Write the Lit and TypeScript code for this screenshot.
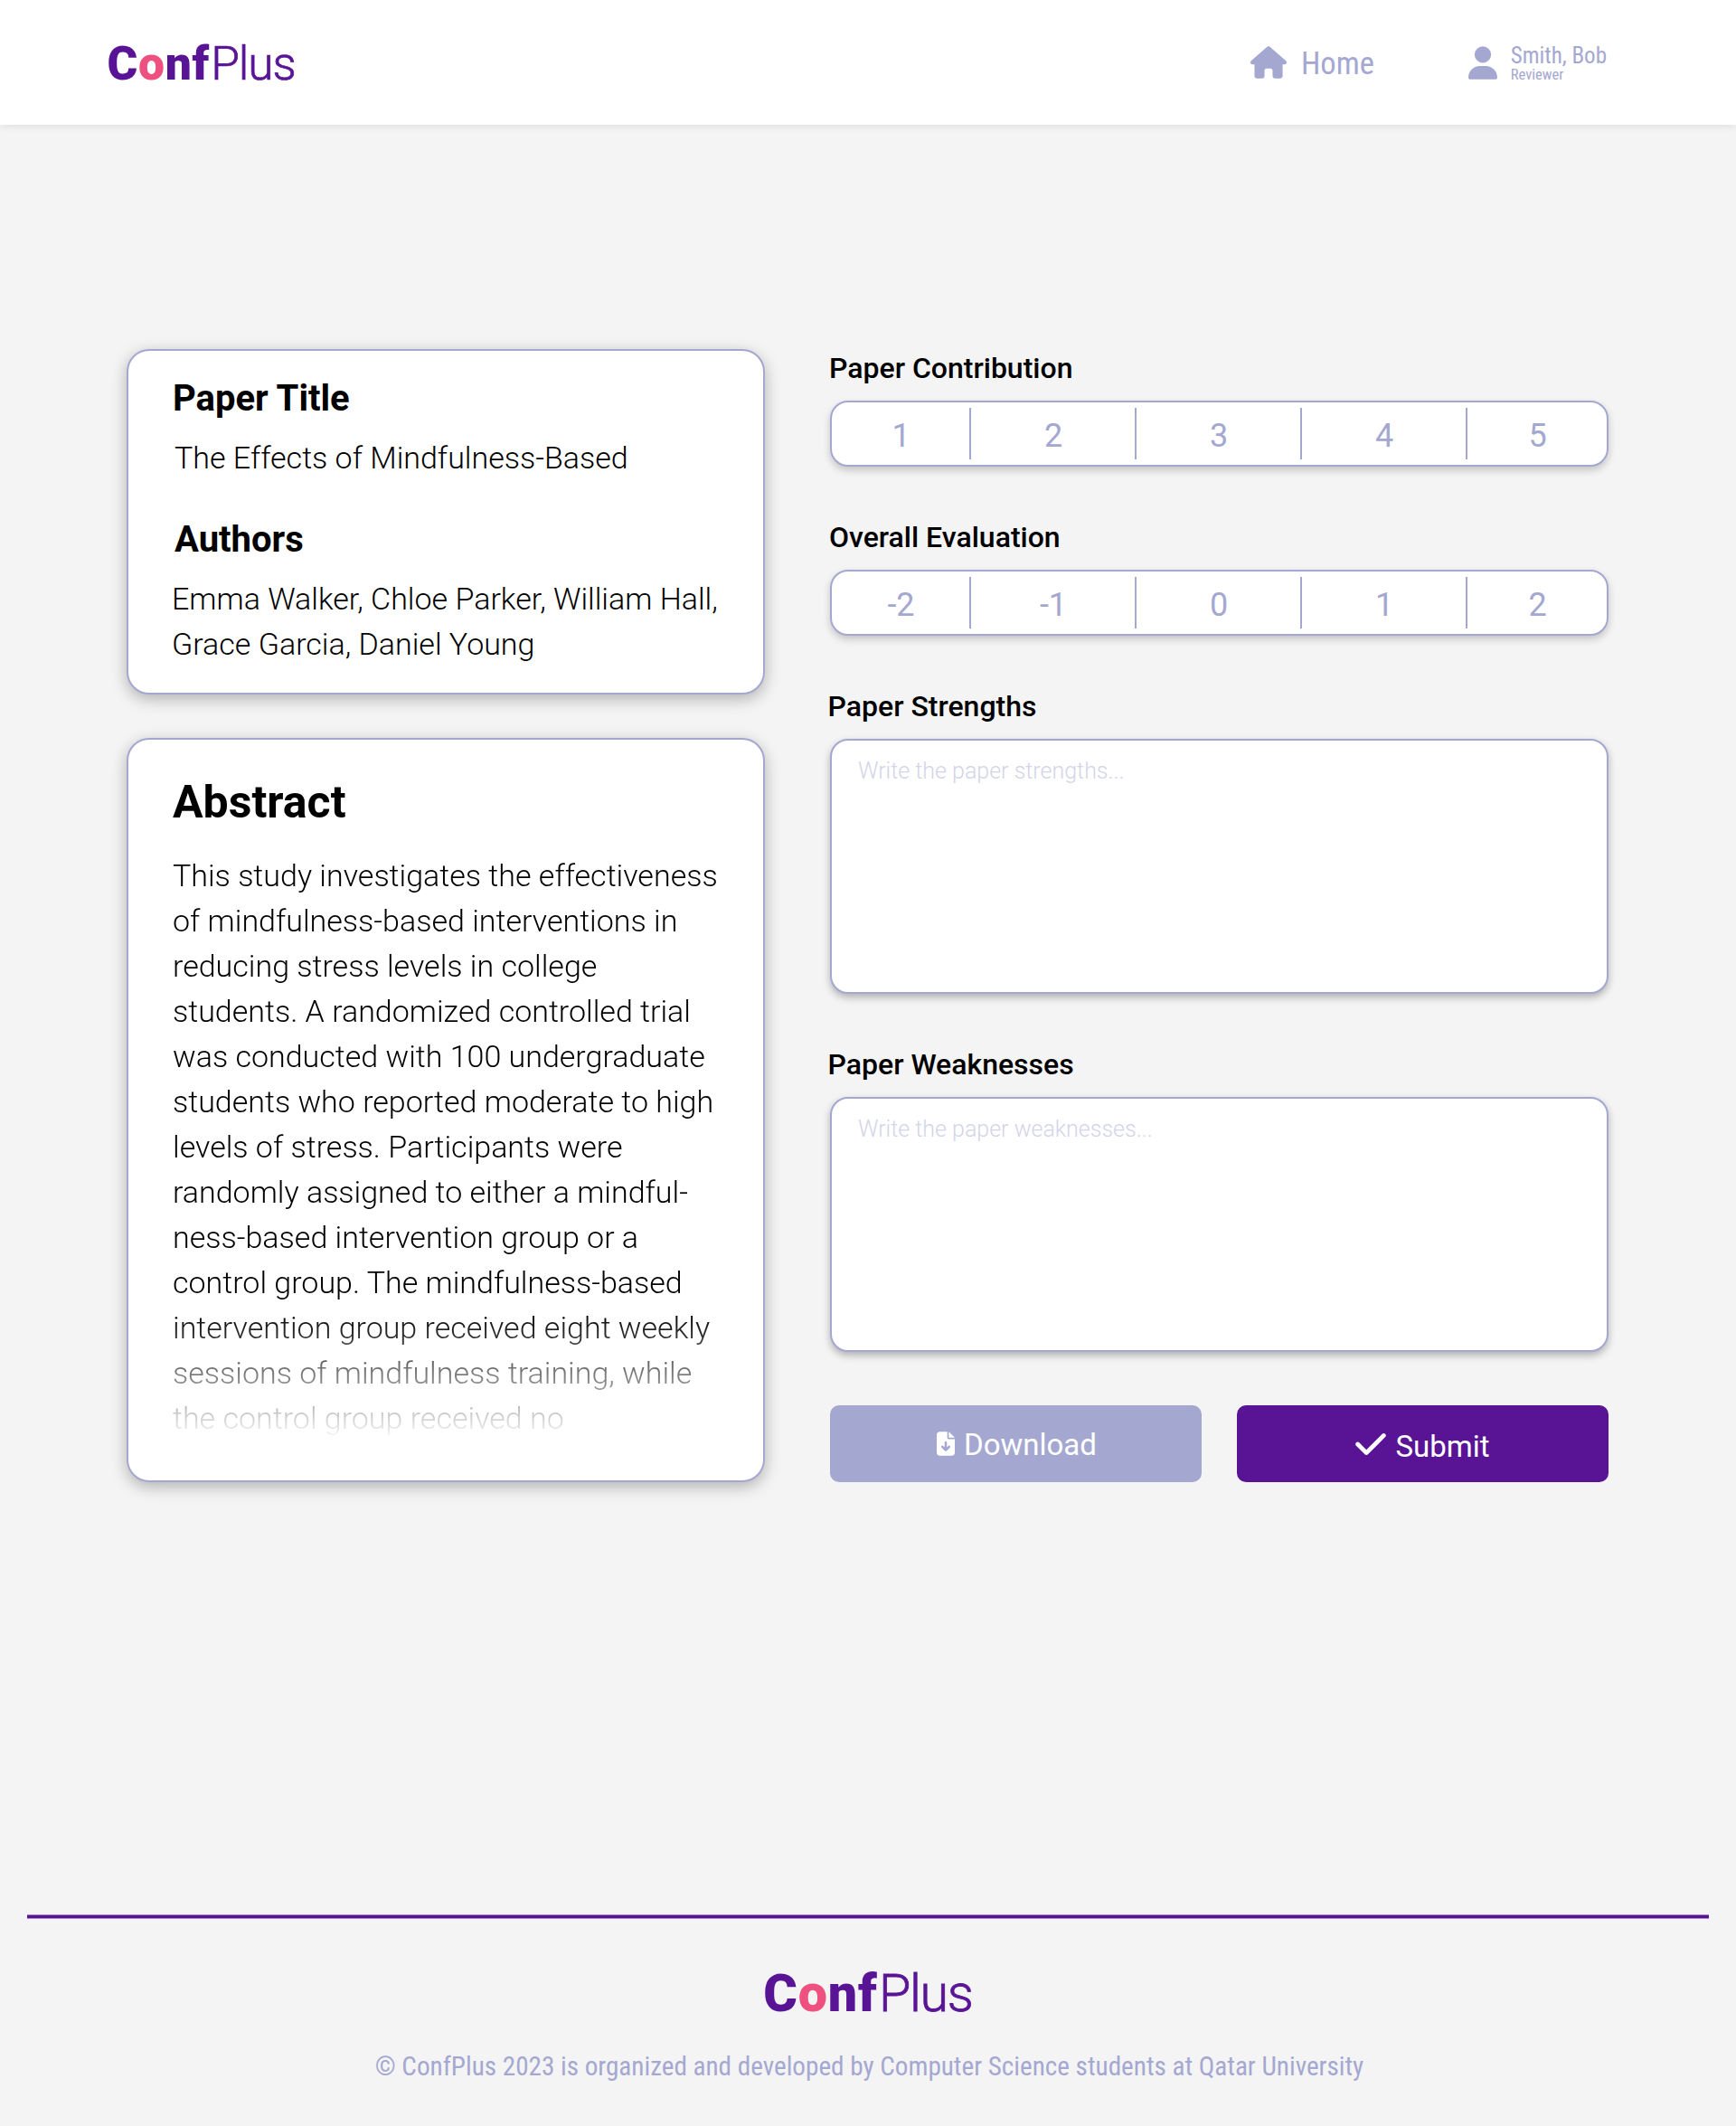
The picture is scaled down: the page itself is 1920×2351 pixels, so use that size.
import { LitElement, html, css, svg } from "lit";
import { customElement, property, state } from "lit/decorators.js";
import { classMap } from "lit/directives/class-map.js";

const icons = {
  house: {
    box: "0 0 576 512",
    d: "M575.8 255.5c0 18-15 32.1-32 32.1h-32l.7 160.2c0 2.7-.2 5.4-.5 8.1V472c0 22.1-17.9 40-40 40H456c-1.1 0-2.2 0-3.3-.1c-1.4 .1-2.8 .1-4.2 .1H416 392c-22.1 0-40-17.9-40-40V448 384c0-17.7-14.3-32-32-32H256c-17.7 0-32 14.3-32 32v64 24c0 22.1-17.9 40-40 40H160 128.1c-1.5 0-3-.1-4.5-.2c-1.2 .1-2.4 .2-3.6 .2H104c-22.1 0-40-17.9-40-40V360c0-.9 0-1.9 .1-2.8V287.6H32c-18 0-32-14-32-32.1c0-9 3-17 10-24L266.4 8c7-7 15-8 22-8s15 2 21 7L564.8 231.5c8 7 12 15 11 24z",
  },
  user: {
    box: "0 0 448 512",
    d: "M224 256A128 128 0 1 0 224 0a128 128 0 1 0 0 256zm-45.7 48C79.8 304 0 383.8 0 482.3C0 498.7 13.3 512 29.7 512H418.3c16.4 0 29.7-13.3 29.7-29.7C448 383.8 368.2 304 269.7 304H178.3z",
  },
  file: {
    box: "0 0 384 512",
    d: "M64 0C28.7 0 0 28.7 0 64V448c0 35.3 28.7 64 64 64H320c35.3 0 64-28.7 64-64V160H256c-17.7 0-32-14.3-32-32V0H64zM256 0V128H384L256 0zM216 232V334.1l31-31c9.4-9.4 24.6-9.4 33.9 0s9.4 24.6 0 33.9l-72 72c-9.4 9.4-24.6 9.4-33.9 0l-72-72c-9.4-9.4-9.4-24.6 0-33.9s24.6-9.4 33.9 0l31 31V232c0-13.3 10.7-24 24-24s24 10.7 24 24z",
  },
  check: {
    box: "0 96 448 320",
    d: "M438.6 105.4c12.5 12.5 12.5 32.8 0 45.3l-256 256c-12.5 12.5-32.8 12.5-45.3 0l-128-128c-12.5-12.5-12.5-32.8 0-45.3s32.8-12.5 45.3 0L160 338.7 393.4 105.4c12.5-12.5 32.8-12.5 45.3 0z",
  },
};

type IconName = keyof typeof icons;

const icon = (name: IconName) => html`
  <svg class="icon icon-${name}" viewBox=${icons[name].box} aria-hidden="true">
    ${svg`<path fill="currentColor" d=${icons[name].d}></path>`}
  </svg>
`;

@customElement("conf-logo")
export class ConfLogo extends LitElement {
  static styles = css`
    :host {
      display: block;
      white-space: nowrap;
      color: #591496;
      line-height: 1.2;
    }
    .conf {
      font-weight: 900;
      letter-spacing: 0.013em;
    }
    .accent {
      color: #ee5080;
    }
    .plus {
      margin-left: 0.025em;
      font-weight: 300;
      letter-spacing: -0.022em;
      -webkit-text-stroke: 0.014em #591496;
    }
  `;

  render() {
    return html`<span class="conf">C<span class="accent">o</span>nf</span><span class="plus">Plus</span>`;
  }
}

@customElement("rating-scale")
export class RatingScale extends LitElement {
  @property({ type: Array }) options: number[] = [];
  @state() private selected: number | null = null;

  static styles = css`
    :host {
      display: block;
    }
    .scale {
      box-sizing: border-box;
      height: 73px;
      padding: 6px 0;
      display: grid;
      grid-template-columns: 152px 183px 183px 183px 1fr;
      background: #fff;
      border: 2px solid #a4a8d1;
      border-radius: 20px;
      box-shadow: 0 4px 8px rgba(0, 0, 0, 0.2);
    }
    .option {
      box-sizing: border-box;
      padding: 5px 0 0 1px;
      height: 57px;
      line-height: 52px;
      font-size: 36px;
      text-align: center;
      color: #a4a8d1;
      cursor: pointer;
    }
    .option + .option {
      border-left: 2px solid #a4a8d1;
    }
    .selected {
      color: #591496;
    }
  `;

  render() {
    return html`
      <div class="scale">
        ${this.options.map(
          (value) => html`<div
            class=${classMap({ option: true, selected: this.selected === value })}
            @click=${() => (this.selected = value)}
          >${value}</div>`,
        )}
      </div>
    `;
  }
}

@customElement("app-root")
export class AppRoot extends LitElement {
  static styles = css`
    :host {
      display: flex;
      flex-direction: column;
      height: 2351px;
      background: #f4f4f4;
      font-family: Roboto, "Liberation Sans", sans-serif;
      color: #000;
    }
    * {
      box-sizing: border-box;
      margin: 0;
    }
    .icon {
      display: block;
      flex: none;
    }
    .icon-house {
      width: 40px;
      height: 36px;
    }
    .icon-user {
      width: 32px;
      height: 37px;
    }
    .icon-file {
      width: 20px;
      height: 27px;
      margin-top: 29px;
    }
    .icon-check {
      width: 34px;
      height: 24px;
      margin-top: 31px;
    }

    .header {
      flex: none;
      display: flex;
      justify-content: space-between;
      height: 138px;
      padding: 0 143px 0 118.5px;
      background: #fff;
      box-shadow: 0 0 10px rgba(0, 0, 0, 0.12);
    }
    .brand {
      font-size: 51.6px;
      margin-top: 40px;
    }
    .nav {
      display: flex;
      gap: 104px;
      color: #a4a8d1;
      font-family: "Roboto Condensed", Roboto, sans-serif;
      font-stretch: 75%;
    }
    .home {
      display: flex;
      gap: 16px;
      padding-top: 51px;
      font-size: 34.5px;
      line-height: 38px;
    }
    .user {
      display: flex;
      gap: 15px;
      padding-top: 51px;
    }
    .name {
      margin-top: -4px;
      font-size: 25px;
      line-height: 29px;
    }
    .role {
      margin-top: -3px;
      font-size: 16.5px;
      line-height: 19px;
    }

    .main {
      flex: none;
      display: flex;
      gap: 72px;
      height: 1979px;
      padding: 248px 141px 0 140px;
    }
    .paper {
      flex: none;
      width: 706px;
      display: flex;
      flex-direction: column;
      gap: 48px;
    }
    .card {
      padding: 27px 40px 0 48px;
      background: #fff;
      border: 2px solid #a4a8d1;
      border-radius: 25px;
      box-shadow: 0 5px 17px rgba(0, 0, 0, 0.28);
    }
    .details {
      height: 382px;
    }
    .abstract {
      height: 823px;
      padding: 39px 40px 0 49px;
    }
    .heading {
      font-size: 40px;
      font-weight: 700;
      line-height: 51px;
    }
    .title-heading {
      margin-left: 1px;
    }
    .text {
      font-size: 34px;
      font-weight: 300;
      line-height: 50px;
      white-space: nowrap;
      margin-top: 15px;
    }
    .title {
      margin-left: 3px;
    }
    .authors-heading {
      margin: 40px 0 0 3px;
    }
    .abstract-heading {
      font-size: 50px;
      font-weight: 700;
      line-height: 60px;
    }
    .summary {
      margin-top: 26px;
      -webkit-mask-image: linear-gradient(#000 507px, transparent 651px);
      mask-image: linear-gradient(#000 507px, transparent 651px);
    }

    .review {
      flex: 1;
      display: flex;
      flex-direction: column;
      gap: 58px;
      padding-top: 1px;
    }
    .field {
      display: flex;
      flex-direction: column;
      gap: 16px;
    }
    .label {
      font-size: 32px;
      font-weight: 500;
      line-height: 40px;
      margin-left: -1px;
    }
    .label.outdent {
      margin-left: -2.5px;
    }
    .comment {
      height: 282px;
      padding: 18px 29px;
      background: #fff;
      border: 2px solid #a4a8d1;
      border-radius: 20px;
      box-shadow: 0 4px 8px rgba(0, 0, 0, 0.28);
      font-size: 25px;
      font-weight: 300;
      line-height: 32px;
      color: #d2d4e8;
    }
    .actions {
      display: grid;
      grid-template-columns: 411px 411px;
      justify-content: space-between;
      margin-top: 1px;
    }
    .button {
      display: flex;
      height: 85px;
      border-radius: 10px;
      color: #fff;
      font-size: 33px;
      line-height: 39px;
    }
    .download {
      gap: 10px;
      padding-left: 118px;
      background: #a4a8d1;
    }
    .submit {
      gap: 10.5px;
      padding-left: 131px;
      background: #591496;
    }
    .download .caption {
      margin-top: 24px;
    }
    .submit .caption {
      margin-top: 26px;
    }

    .footer {
      display: flex;
      flex-direction: column;
      align-items: center;
      padding-top: 1px;
    }
    .rule {
      width: 1860px;
      height: 3px;
      background: #591496;
      box-shadow: 0 -1px rgba(89, 20, 150, 0.5), 0 1px rgba(89, 20, 150, 0.5);
    }
    .footer-brand {
      font-size: 57.4px;
      margin-top: 50px;
    }
    .copyright {
      margin-top: 28px;
      padding-left: 3px;
      font-family: "Roboto Condensed", Roboto, sans-serif;
      font-stretch: 75%;
      font-size: 29.17px;
      line-height: 34px;
      color: #a4a8d1;
    }
  `;

  render() {
    return html`
      <header class="header">
        <conf-logo class="brand"></conf-logo>
        <nav class="nav">
          <div class="home">${icon("house")}<span>Home</span></div>
          <div class="user">
            ${icon("user")}
            <div>
              <div class="name">Smith, Bob</div>
              <div class="role">Reviewer</div>
            </div>
          </div>
        </nav>
      </header>

      <main class="main">
        <section class="paper">
          <div class="card details">
            <h2 class="heading title-heading">Paper Title</h2>
            <p class="text title">The Effects of Mindfulness-Based</p>
            <h2 class="heading authors-heading">Authors</h2>
            <p class="text">Emma Walker, Chloe Parker, William Hall,<br />Grace Garcia, Daniel Young</p>
          </div>
          <div class="card abstract">
            <h1 class="abstract-heading">Abstract</h1>
            <p class="text summary">
              This study investigates the effectiveness<br />
              of mindfulness-based interventions in<br />
              reducing stress levels in college<br />
              students. A randomized controlled trial<br />
              was conducted with 100 undergraduate<br />
              students who reported moderate to high<br />
              levels of stress. Participants were<br />
              randomly assigned to either a mindful-<br />
              ness-based intervention group or a<br />
              control group. The mindfulness-based<br />
              intervention group received eight weekly<br />
              sessions of mindfulness training, while<br />
              the control group received no
            </p>
          </div>
        </section>

        <section class="review">
          <div class="field">
            <div class="label">Paper Contribution</div>
            <rating-scale .options=${[1, 2, 3, 4, 5]}></rating-scale>
          </div>
          <div class="field">
            <div class="label">Overall Evaluation</div>
            <rating-scale .options=${[-2, -1, 0, 1, 2]}></rating-scale>
          </div>
          <div class="field">
            <div class="label outdent">Paper Strengths</div>
            <div class="comment">Write the paper strengths...</div>
          </div>
          <div class="field">
            <div class="label outdent">Paper Weaknesses</div>
            <div class="comment">Write the paper weaknesses...</div>
          </div>
          <div class="actions">
            <div class="button download">${icon("file")}<span class="caption">Download</span></div>
            <div class="button submit">${icon("check")}<span class="caption">Submit</span></div>
          </div>
        </section>
      </main>

      <footer class="footer">
        <div class="rule"></div>
        <conf-logo class="footer-brand"></conf-logo>
        <p class="copyright">© ConfPlus 2023 is organized and developed by Computer Science students at Qatar University</p>
      </footer>
    `;
  }
}
